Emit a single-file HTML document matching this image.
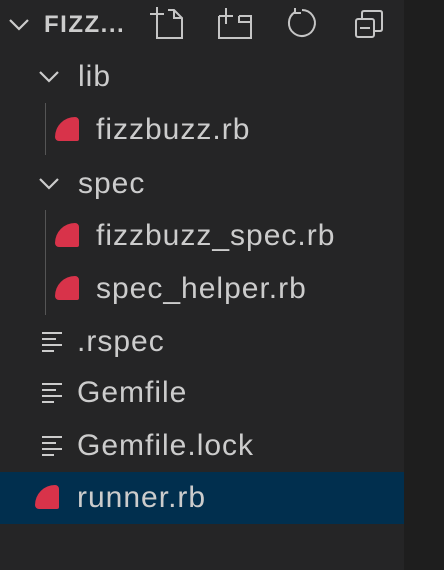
<!DOCTYPE html>
<html><head><style>
body{margin:0;width:444px;height:570px;background:#1e1e1e;overflow:hidden;font-family:"Liberation Sans",sans-serif;}
#side{position:absolute;left:0;top:0;width:404px;height:570px;background:#252526;}
.row{position:absolute;left:0;width:404px;height:52px;color:#cccccc;font-size:30px;letter-spacing:1px;}
.row span{position:absolute;top:9px;}
.sel{background:#012f4e;}
.rb{position:absolute;width:24px;height:24px;background:#d8334a;border-radius:20px 4px 2px 4px;}
.guide{position:absolute;left:45px;width:0;border-left:1px solid #555;}
svg{position:absolute;}
</style></head><body>
<div id="side">
<svg style="left:8px;top:15px" width="24" height="20"><path d="M2 5 L11 14 L20 5" stroke="#ccc" stroke-width="2.2" fill="none"/></svg>
<div style="position:absolute;left:44px;top:11px;color:#ccc;font-weight:bold;font-size:24px;letter-spacing:1.5px">FIZZ...</div>
<svg style="left:148px;top:4px" width="40" height="36" fill="none" stroke="#c5c5c5" stroke-width="2">
<path d="M9 10 V34 H34 V14 L26 6 H20 M26 6 V14 H34 M2 10 H16 M9 3 V17"/>
</svg>
<svg style="left:214px;top:4px" width="40" height="36" fill="none" stroke="#c5c5c5" stroke-width="2">
<path d="M5 12 V34 H37 V12 H25 M5 12 H19 M12 4 V20 M25 12 V18 H37"/>
</svg>
<svg style="left:285px;top:6px" width="36" height="34" fill="none" stroke="#c5c5c5" stroke-width="2">
<path d="M10 6 A13 13 0 1 0 17 4 M10 2 V7 H16"/>
</svg>
<svg style="left:353px;top:8px" width="34" height="32" fill="none" stroke="#c5c5c5" stroke-width="2">
<rect x="3" y="11" width="18" height="18" rx="2"/>
<path d="M9 11 V5 Q9 3 11 3 H27 Q29 3 29 5 V21 Q29 23 27 23 H21 M7 20 H17"/>
</svg>
<svg style="left:38px;top:68px" width="24" height="20"><path d="M2 4 L11 13 L20 4" stroke="#ccc" stroke-width="2.2" fill="none"/></svg>
<div class="row" style="top:51px"><span style="left:78px">lib</span></div>
<div class="guide" style="top:103px;height:52px"></div>
<div class="row" style="top:104px"><div class="rb" style="left:55px;top:13px"></div><span style="left:96px">fizzbuzz.rb</span></div>
<svg style="left:38px;top:175px" width="24" height="20"><path d="M2 4 L11 13 L20 4" stroke="#ccc" stroke-width="2.2" fill="none"/></svg>
<div class="row" style="top:158px"><span style="left:78px">spec</span></div>
<div class="guide" style="top:210px;height:105px"></div>
<div class="row" style="top:210px"><div class="rb" style="left:55px;top:13px"></div><span style="left:96px">fizzbuzz_spec.rb</span></div>
<div class="row" style="top:263px"><div class="rb" style="left:55px;top:13px"></div><span style="left:96px">spec_helper.rb</span></div>
<div class="row" style="top:316px"><svg style="left:42px;top:15px" width="22" height="22" stroke="#ccc" stroke-width="2"><path d="M0 2H20M0 8H14M0 14H20M0 20H12"/></svg><span style="left:77px">.rspec</span></div>
<div class="row" style="top:367px"><svg style="left:42px;top:15px" width="22" height="22" stroke="#ccc" stroke-width="2"><path d="M0 2H20M0 8H14M0 14H20M0 20H12"/></svg><span style="left:77px">Gemfile</span></div>
<div class="row" style="top:420px"><svg style="left:42px;top:15px" width="22" height="22" stroke="#ccc" stroke-width="2"><path d="M0 2H20M0 8H14M0 14H20M0 20H12"/></svg><span style="left:77px">Gemfile.lock</span></div>
<div class="row sel" style="top:472px"><div class="rb" style="left:35px;top:13px"></div><span style="left:77px">runner.rb</span></div>
</div>
</body></html>
